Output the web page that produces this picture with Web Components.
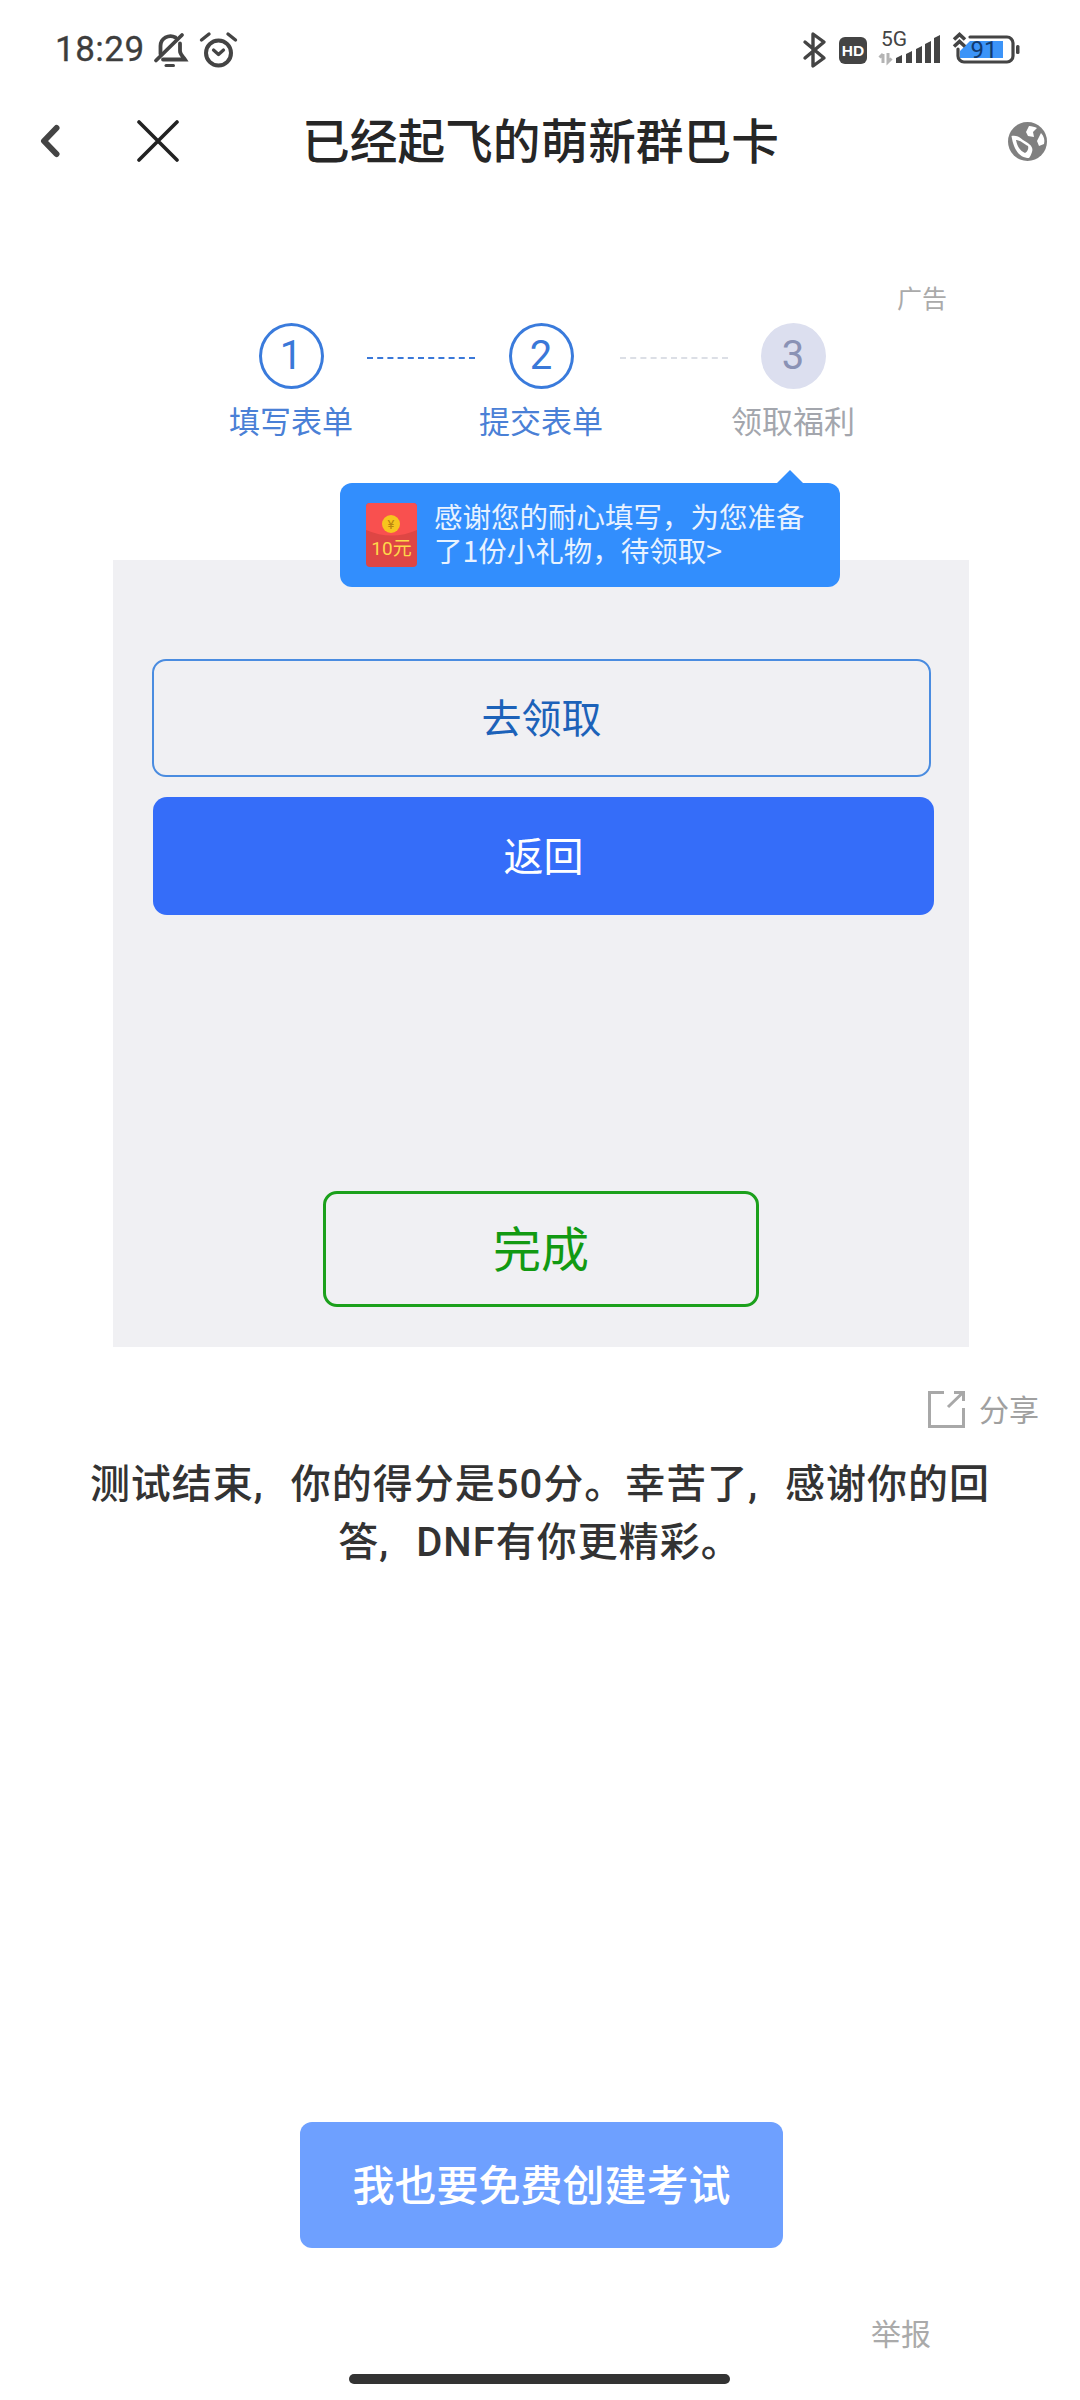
<!DOCTYPE html>
<html lang="zh-CN">
<head>
<meta charset="utf-8">
<title>已经起飞的萌新群巴卡</title>
<style>
    html, body { margin: 0; background: #fff; }
    body { font-family: Roboto, "Noto Sans CJK SC", sans-serif; }
</style>
</head>
<body>
<result-page></result-page>
<script>
class StatusBar extends HTMLElement {
    constructor() {
        super();
        const shadow = this.attachShadow({ mode: 'open' });
        shadow.innerHTML = `
        <style>
            :host { display: flex; align-items: center; height: 36px; padding: 32px 61px 0 55px; color: #3d3d3d; }
            .time { font: 400 35px/36px Roboto, sans-serif; width: 98px; letter-spacing: 0.5px; white-space: nowrap; -webkit-text-stroke: 0.3px #3d3d3d; }
            svg { display: block; flex: none; overflow: visible; }
            .alarm { margin-left: 13px; }
            .right { margin-left: auto; display: flex; align-items: center; }
            .hd { margin-left: 13px; }
            .sig { margin-left: 12px; }
            .bat { margin-left: 13px; }
        </style>
        <span class="time">18:29</span>
        <svg width="34" height="36" viewBox="0 0 34 36" fill="none" stroke="#444" stroke-width="3.8" stroke-linecap="round">
            <path d="M7.5 22V14a10 10 0 0 1 15-8.5"/>
            <path d="M27 11.5V19c0 3.5 3 5.5 5 8.5H10"/>
            <path d="M3 28.5 29 3"/>
            <path d="M13 33.5h7.5" stroke-width="3"/>
        </svg>
        <svg class="alarm" width="37" height="36" viewBox="0 0 37 36" fill="none" stroke="#444" stroke-linecap="round" stroke-linejoin="round">
            <circle cx="18.5" cy="21" r="12.5" stroke-width="4"/>
            <path d="M1.5 8 9 2M28 2l7.5 6" stroke-width="3.4"/>
            <path d="M13.5 18l5 4.5 5-4.5" stroke-width="3.2"/>
        </svg>
        <div class="right">
            <svg width="23" height="36" viewBox="0 0 23 36" fill="none" stroke="#444" stroke-width="3.4" stroke-linecap="round" stroke-linejoin="round">
                <path d="M2 10 21 26 10 34V2L21 10 2 26"/>
            </svg>
            <svg class="hd" width="28" height="27" viewBox="0 0 28 27">
                <rect width="28" height="27" rx="6" fill="#444"/>
                <text x="14" y="19" text-anchor="middle" font-family="Liberation Sans, sans-serif" font-weight="700" font-size="15.5" fill="#fff">HD</text>
            </svg>
            <svg class="sig" width="61" height="36" viewBox="0 0 61 36">
                <text x="2" y="14" font-family="Roboto, sans-serif" font-size="21" fill="#444">5G</text>
                <path d="M4 22v9M0.5 25.5 4 22M9 21v9l3.5-3.5" fill="none" stroke="#b4b4b4" stroke-width="3"/>
                <path d="M17 26l6-3v8h-6zM27 22l6-3v12h-6zM37 17l6-3v17h-6zM46 12l6-3v22h-6zM55 6l6-3v28h-6z" fill="#444"/>
            </svg>
            <svg class="bat" width="66" height="36" viewBox="0 0 66 36">
                <path d="M17 5h37a6 6 0 0 1 6 6v13a6 6 0 0 1-6 6H11a6 6 0 0 1-6-6V17" fill="none" stroke="#444" stroke-width="3.2" stroke-linecap="round"/>
                <path d="M17 9h33v17H7v-7z" fill="#3c94f8"/>
                <path d="M1 7.5l5.5-5 5.5 5M1 14.5l5.5-5 5.5 5" fill="none" stroke="#444" stroke-width="3.6"/>
                <rect x="63" y="13" width="3.5" height="9" rx="1.5" fill="#444"/>
                <text x="31" y="26" text-anchor="middle" font-family="Roboto, sans-serif" font-size="24" fill="#123a6e">91</text>
            </svg>
        </div>
        `;
    }
}

class NavBar extends HTMLElement {
    constructor() {
        super();
        const shadow = this.attachShadow({ mode: 'open' });
        shadow.innerHTML = `
        <style>
            :host { display: flex; align-items: center; height: 146px; padding: 0 33px 0 40px; }
            svg { display: block; flex: none; }
            .close { margin-left: 77px; }
            .title { margin: 4px 0 0 123px; font: 500 47.7px/60px Roboto, "Noto Sans CJK SC", sans-serif; color: #262626; white-space: nowrap; }
            .globe { margin-left: auto; }
        </style>
        <svg width="20" height="34" viewBox="0 0 20 34" fill="none" stroke="#444" stroke-width="6" stroke-linecap="round" stroke-linejoin="round">
            <path d="M16.5 4 4 17l12.5 13"/>
        </svg>
        <svg class="close" width="42" height="42" viewBox="0 0 42 42" fill="none" stroke="#222" stroke-width="3.6" stroke-linecap="round">
            <path d="M2 2l38 38M40 2 2 40"/>
        </svg>
        <span class="title"><slot></slot></span>
        <svg class="globe" width="39" height="39" viewBox="0 0 39 39">
            <circle cx="19.5" cy="19.5" r="19.5" fill="#808080"/>
            <path d="M3.5 14C8 13 12 15 15 18c5 3 11 6 9 12-1 3-2 5-3 6C13 36 6 30 3.5 14z" fill="#fff"/>
            <path d="M8 18c4 0 8 4 12 6 1 3-1 6-3 7-5-2-8-7-9-13z" fill="#808080"/>
            <path d="M21 4c3 0 6 1 8 2l-4 4 1 5-6-1-2-4z" fill="#fff"/>
            <path d="M33 11l-4 8 2 5 5-2c1-4 0-8-3-11z" fill="#fff"/>
        </svg>
        `;
    }
}

class StepItem extends HTMLElement {
    constructor() {
        super();
        const shadow = this.attachShadow({ mode: 'open' });
        const num = this.getAttribute('num');
        shadow.innerHTML = `
        <style>
            :host { display: flex; flex-direction: column; align-items: center; width: 124px; flex: none; color: #4a80d6; }
            .circle {
                box-sizing: border-box; width: 65px; height: 66px; border-radius: 50%;
                border: 3px solid #3a7bdc; display: flex; align-items: center; justify-content: center;
                font: 400 40px/1 Roboto, sans-serif; color: #3a78d8;
            }
            .label { margin-top: 16px; font: 400 31px/36px Roboto, "Noto Sans CJK SC", sans-serif; white-space: nowrap; }
            :host([todo]) { color: #a3a6ad; }
            :host([todo]) .circle { background: #dcdfef; border-color: #dcdfef; color: #8a92b5; }
        </style>
        <div class="circle">${num}</div>
        <div class="label"><slot></slot></div>
        `;
    }
}

class StepLine extends HTMLElement {
    constructor() {
        super();
        const shadow = this.attachShadow({ mode: 'open' });
        shadow.innerHTML = `
        <style>
            :host { display: block; flex: none; width: 108px; height: 0; margin-top: 34px; border-top: 2px dashed #3a78d8; }
            :host([todo]) { border-top-color: #dcdfe6; }
        </style>
        `;
    }
}

class PromoTip extends HTMLElement {
    constructor() {
        super();
        const shadow = this.attachShadow({ mode: 'open' });
        shadow.innerHTML = `
        <style>
            :host {
                position: absolute; left: 340px; top: 160px; width: 500px; height: 104px; box-sizing: border-box;
                display: flex; align-items: center; padding: 0 20px 0 26px;
                background: #328efd; border-radius: 12px; color: #e8f2ff;
            }
            :host::before {
                content: ""; position: absolute; left: 436px; top: -13px; width: 28px; height: 14px;
                background: #328efd; clip-path: polygon(50% 0, 100% 100%, 0 100%);
            }
            svg { display: block; flex: none; }
            .msg { margin: 0 0 5px 17px; font: 400 28.5px/34px "Noto Sans CJK SC", sans-serif; white-space: nowrap; }
        </style>
        <svg width="51" height="64" viewBox="0 0 51 64">
            <rect width="51" height="64" rx="4" fill="#de4644"/>
            <path d="M0 4a4 4 0 0 1 4-4h43a4 4 0 0 1 4 4v23q-25 11-51 0z" fill="#f9504f"/>
            <circle cx="25" cy="21" r="9" fill="#f7c51e"/>
            <text x="25" y="26" text-anchor="middle" font-family="Roboto, sans-serif" font-size="13" fill="#b98310">¥</text>
            <text x="25.5" y="52" text-anchor="middle" font-family="Roboto, 'Noto Sans CJK SC', sans-serif" font-size="19" fill="#ffd84a">10元</text>
        </svg>
        <div class="msg"><slot></slot></div>
        `;
    }
}

class ActionBtn extends HTMLElement {
    constructor() {
        super();
        const shadow = this.attachShadow({ mode: 'open' });
        shadow.innerHTML = `
        <style>
            :host {
                display: flex; align-items: center; justify-content: center; box-sizing: border-box;
                height: 118px; padding-top: 3px; border-radius: 14px; font: 400 40px/1 Roboto, "Noto Sans CJK SC", sans-serif;
            }
            :host([kind="outline"]) { border: 2px solid #4a8ce0; color: #1c62b9; width: 779px; }
            :host([kind="solid"]) { background: #356df9; color: #fff; width: 781px; margin: 20px 0 0 1px; }
            :host([kind="done"]) {
                border: 3px solid #1ba01b; color: #129a12; width: 436px; height: 116px;
                margin: 276px 0 0 171px; font-size: 48px;
            }
            :host([kind="cta"]) {
                background: #6ea0ff; color: #fff; width: 483px; height: 126px; margin-left: 300px;
                border-radius: 12px; font-size: 42px; font-weight: 500;
            }
        </style>
        <slot></slot>
        `;
    }
}

class ShareLink extends HTMLElement {
    constructor() {
        super();
        const shadow = this.attachShadow({ mode: 'open' });
        shadow.innerHTML = `
        <style>
            :host { display: flex; justify-content: flex-end; align-items: center; height: 37px; margin-top: 44px; padding-right: 41px; color: #a0a0a0; }
            svg { display: block; flex: none; }
            span { margin: 3px 0 0 14px; font: 400 30px/36px Roboto, "Noto Sans CJK SC", sans-serif; }
        </style>
        <svg width="37" height="37" viewBox="0 0 37 37" fill="none" stroke="#a8a8a8" stroke-width="3">
            <path d="M16 1.5H1.5v34H35.5V17"/>
            <path d="M20 16 35 1.5M26 1.5h9.5V10"/>
        </svg>
        <span><slot></slot></span>
        `;
    }
}

class ResultPage extends HTMLElement {
    constructor() {
        super();
        const shadow = this.attachShadow({ mode: 'open' });
        shadow.innerHTML = `
        <style>
            :host { display: flex; flex-direction: column; width: 1080px; height: 2400px; overflow: hidden; background: #fff; }
            .ad { margin-top: 71px; height: 30px; padding-right: 133px; text-align: right; font: 400 25px/30px Roboto, "Noto Sans CJK SC", sans-serif; color: #aaa; }
            .steps-wrap { position: relative; height: 237px; margin-top: 8px; }
            .steps { display: flex; padding-left: 229px; }
            .gap1 { margin: 34px 4px 0 14px; }
            .gap2 { margin: 34px 3px 0 17px; }
            .panel { box-sizing: border-box; height: 787px; width: 856px; margin-left: 113px; padding: 99px 39px 0; background: #f0f0f3; }
            .result { margin-top: 28px; padding: 0 80px; text-align: center; font: 500 40px/58px Roboto, "Noto Sans CJK SC", sans-serif; letter-spacing: 1px; word-spacing: 16px; color: #333; }
            .foot { margin-top: auto; }
            .report { margin-top: 69px; padding-right: 149px; text-align: right; font: 400 30px/36px Roboto, "Noto Sans CJK SC", sans-serif; color: #aaa; }
            .home { width: 381px; height: 10px; margin: 21px 0 16px 349px; border-radius: 5px; background: #333; }
        </style>
        <status-bar></status-bar>
        <nav-bar>已经起飞的萌新群巴卡</nav-bar>
        <div class="ad">广告</div>
        <div class="steps-wrap">
            <div class="steps">
                <step-item num="1">填写表单</step-item>
                <step-line class="gap1"></step-line>
                <step-item num="2">提交表单</step-item>
                <step-line class="gap2" todo></step-line>
                <step-item num="3" todo>领取福利</step-item>
            </div>
            <promo-tip>感谢您的耐心填写&#xFF0C;为您准备<br>了1份小礼物&#xFF0C;待领取&gt;</promo-tip>
        </div>
        <section class="panel">
            <action-btn kind="outline">去领取</action-btn>
            <action-btn kind="solid">返回</action-btn>
            <action-btn kind="done">完成</action-btn>
        </section>
        <share-link>分享</share-link>
        <div class="result">测试结束, 你的得分是50分。幸苦了, 感谢你的回答, DNF有你更精彩。</div>
        <div class="foot">
            <action-btn kind="cta">我也要免费创建考试</action-btn>
            <div class="report">举报</div>
            <div class="home"></div>
        </div>
        `;
    }
}

customElements.define('status-bar', StatusBar);
customElements.define('nav-bar', NavBar);
customElements.define('step-item', StepItem);
customElements.define('step-line', StepLine);
customElements.define('promo-tip', PromoTip);
customElements.define('action-btn', ActionBtn);
customElements.define('share-link', ShareLink);
customElements.define('result-page', ResultPage);
</script>
</body>
</html>
